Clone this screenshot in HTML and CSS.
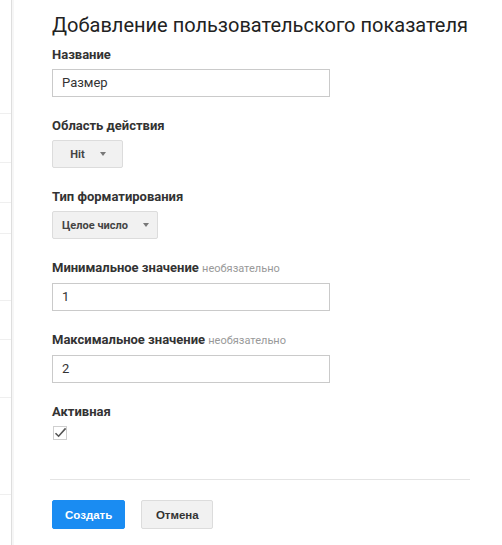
FILE: index.html
```html
<!DOCTYPE html>
<html lang="ru">
<head>
<meta charset="utf-8">
<title>Добавление пользовательского показателя</title>
<link rel="stylesheet" href="styles.css">
</head>
<body>
<div class="page">
  <aside class="rail">
    <div class="rail-row r1"></div>
    <div class="rail-row r2"></div>
    <div class="rail-row r3"></div>
    <div class="rail-row r4"></div>
    <div class="rail-row r5"></div>
    <div class="rail-row r6"></div>
    <div class="rail-row r7"></div>
    <div class="rail-row r8"></div>
  </aside>
  <main class="main">
    <h1 class="title">Добавление пользовательского показателя</h1>

    <div class="field first">
      <div class="label">Название</div>
      <div class="input">Размер</div>
    </div>

    <div class="field">
      <div class="label">Область действия</div>
      <div class="select"><span>Hit</span><span class="caret"></span></div>
    </div>

    <div class="field">
      <div class="label">Тип форматирования</div>
      <div class="select"><span>Целое число</span><span class="caret"></span></div>
    </div>

    <div class="field">
      <div class="label">Минимальное значение <span class="opt">необязательно</span></div>
      <div class="input">1</div>
    </div>

    <div class="field">
      <div class="label">Максимальное значение <span class="opt">необязательно</span></div>
      <div class="input">2</div>
    </div>

    <div class="field">
      <div class="label">Активная</div>
      <div class="checkbox">
        <svg width="14" height="14" viewBox="0 0 14 14">
          <rect x="0.5" y="0.5" width="13" height="13" fill="#fff" stroke="#cfcfcf"/>
          <path d="M2.5 7.2 L5.6 10.2 L12.6 2.4" fill="none" stroke="#555" stroke-width="1.6"/>
        </svg>
      </div>
    </div>

    <div class="separator"></div>

    <div class="actions">
      <button class="btn primary">Создать</button>
      <button class="btn">Отмена</button>
    </div>
  </main>
</div>
</body>
</html>
```

FILE: styles.css
```css
html, body {
  margin: 0;
  padding: 0;
  background: #fff;
}

body {
  font-family: Roboto, "Liberation Sans", Arial, sans-serif;
  color: #333;
}

.page {
  display: flex;
  min-height: 545px;
}

.rail {
  width: 11px;
  border-right: 1px solid #dedede;
  box-shadow: 2px 0 0 #f6f6f6;
  flex: none;
}

.rail-row {
  border-bottom: 1px solid #efefef;
  box-sizing: border-box;
}
.r1 { height: 114px; }
.r2 { height: 49px; }
.r3 { height: 40px; }
.r4 { height: 31px; }
.r5 { height: 67px; }
.r6 { height: 39px; }
.r7 { height: 58px; }
.r8 { height: 97px; }

.main {
  padding: 13px 0 0 40px;
  width: 418px;
}

.title {
  margin: 0;
  font-size: 20px;
  line-height: 24px;
  font-weight: 400;
  color: #222;
  white-space: nowrap;
}

.field {
  margin-top: 21px;
}
.field.first {
  margin-top: 10px;
}

.label {
  font-size: 13px;
  line-height: 16px;
  font-weight: 700;
  color: #333;
  margin-bottom: 6px;
  white-space: nowrap;
}

.opt {
  font-size: 11px;
  font-weight: 400;
  color: #999;
}

.input {
  box-sizing: border-box;
  width: 278px;
  height: 28px;
  border: 1px solid #cacaca;
  padding: 0 9px;
  font-size: 13px;
  line-height: 26px;
  color: #333;
}

.select {
  box-sizing: border-box;
  display: inline-flex;
  align-items: center;
  justify-content: center;
  gap: 15px;
  min-width: 71px;
  height: 28px;
  padding: 0 8px 0 9px;
  background: #f1f1f1;
  border: 1px solid #dcdcdc;
  border-radius: 2px;
  font-size: 11px;
  font-weight: 700;
  color: #444;
}

.caret {
  width: 0;
  height: 0;
  border-left: 3.5px solid transparent;
  border-right: 3.5px solid transparent;
  border-top: 4px solid #777;
}

.checkbox {
  margin-top: 3px;
  height: 14px;
  padding-left: 1px;
}
.checkbox svg {
  display: block;
}

.separator {
  height: 1px;
  background: #e4e4e4;
  margin: 39px 0 0 -2px;
  width: 420px;
}

.actions {
  display: flex;
  gap: 16px;
  margin-top: 20px;
}

.btn {
  box-sizing: border-box;
  min-width: 72px;
  height: 29px;
  padding: 0 12px;
  border: 1px solid #dcdcdc;
  border-radius: 2px;
  background: #f1f1f1;
  font-family: "Liberation Sans", Arial, sans-serif;
  font-size: 11.5px;
  font-weight: 700;
  color: #333;
}

.btn.primary {
  background: #1a8cf2;
  border-color: #1a8cf2;
  color: #fff;
}
```
